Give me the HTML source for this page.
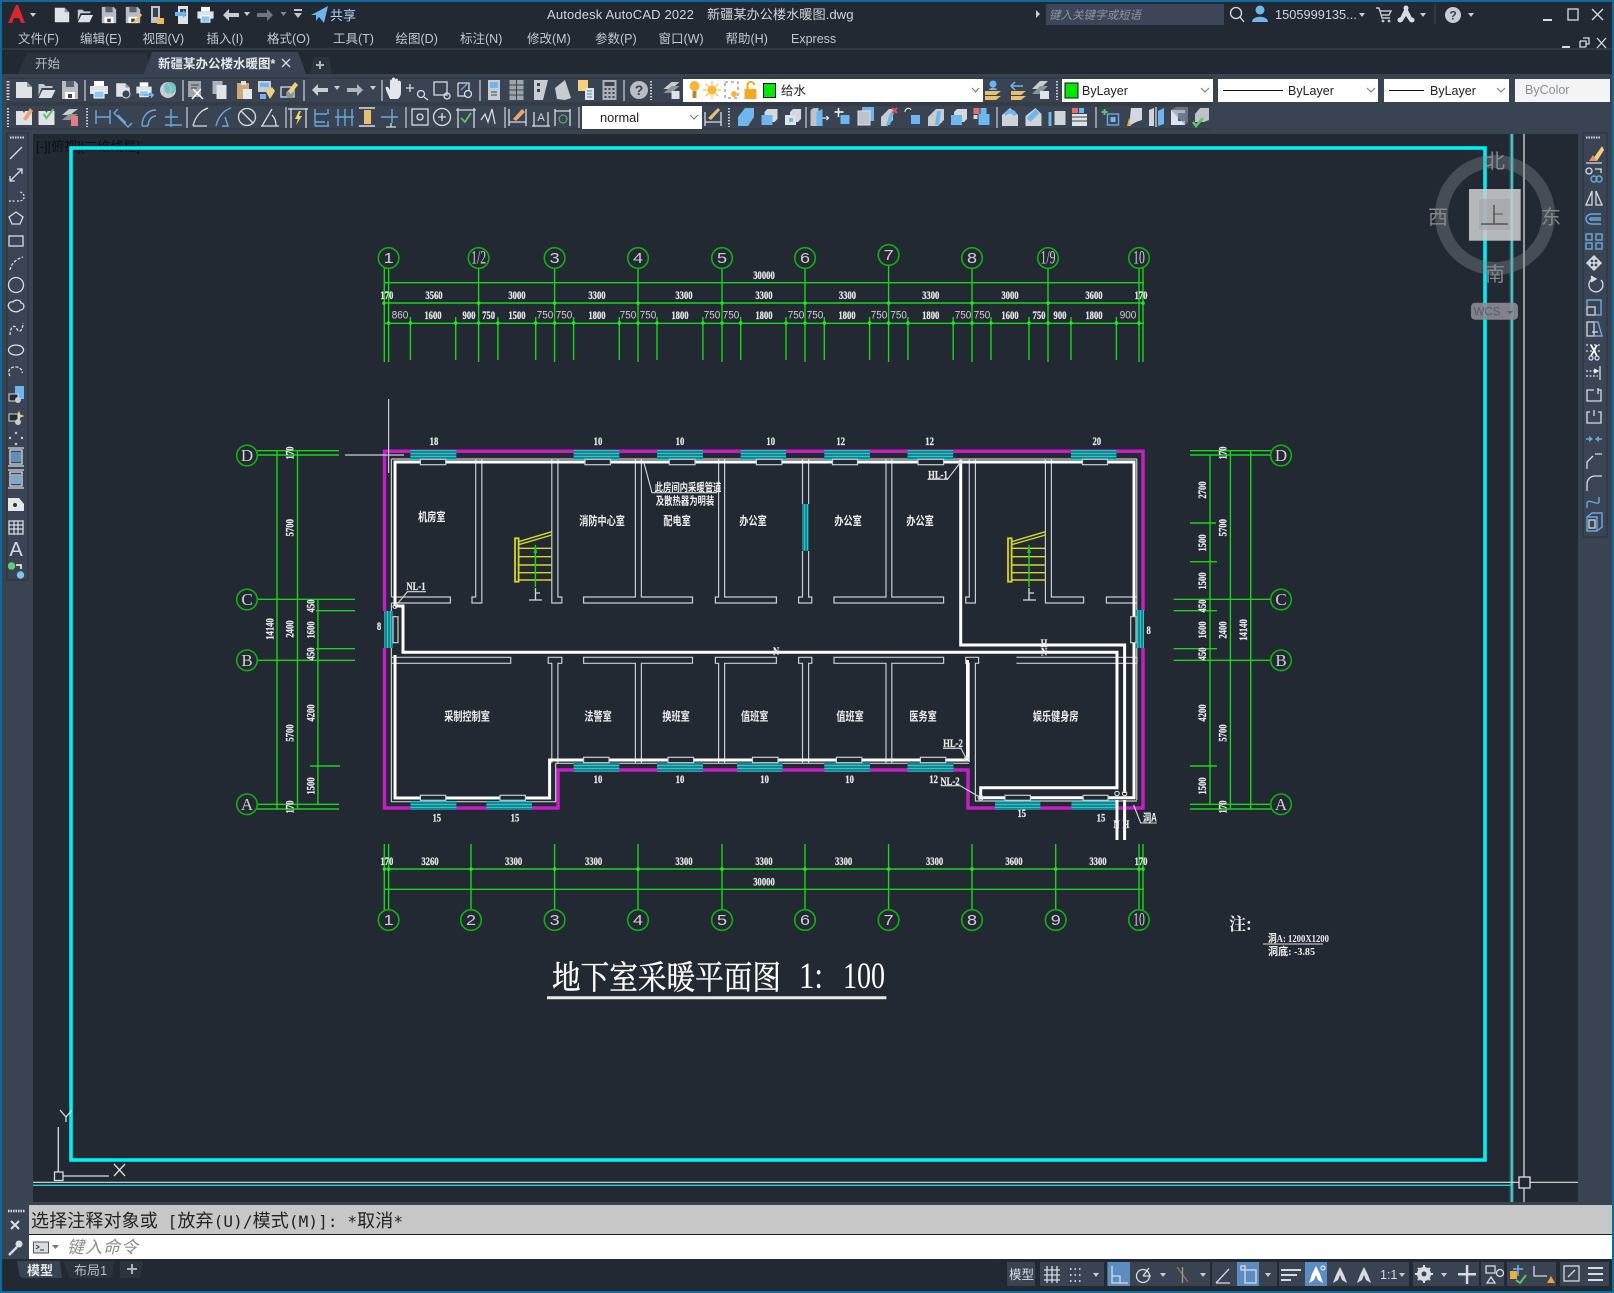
<!DOCTYPE html>
<html lang="zh"><head><meta charset="utf-8"><title>AutoCAD</title>
<style>
html,body{margin:0;padding:0;background:#222932;width:1614px;height:1293px;overflow:hidden}
svg{display:block;position:absolute;left:0;top:0}
text{font-family:"Liberation Sans","Noto Sans CJK SC",sans-serif}
.ui{font-size:12.5px;fill:#c4c8cd}
.d,.v,.t,.tv,.r,.n,.nn,.l{text-anchor:middle;dominant-baseline:central;transform-box:fill-box;transform-origin:center}
.d{font:bold 12px "Liberation Serif",serif;fill:#e8e8e8;stroke:#e8e8e8;stroke-width:.25;transform:scaleX(.72)}
.v{font:bold 12px "Liberation Serif",serif;fill:#e8e8e8;stroke:#e8e8e8;stroke-width:.25;transform:rotate(-90deg) scaleX(.72)}
.t{font:11px "Liberation Sans",sans-serif;fill:#d0d0d0;transform:scaleX(.9)}
.r{font:bold 12px "Noto Sans CJK SC",sans-serif;fill:#eee;transform:scaleX(.76)}
.n{font:15px "Liberation Sans",sans-serif;fill:#cfcfcf;transform:scaleX(1.2)}
.nn{font:19px "Liberation Serif",serif;fill:#cfcfcf;transform:scaleX(.62)}
.l{font:17px "Liberation Serif",serif;fill:#cfcfcf}
.g{fill:none;stroke:#1ad41a;stroke-width:1.4}
.c{fill:none;stroke:#12b012;stroke-width:1.6}
.w{fill:none;stroke:#c9cdd3;stroke-width:1.2}
.p{fill:none;stroke:#fff;stroke-width:3}
.s{fill:none;stroke:#d8dce2;stroke-width:1.3}
.b{fill:none;stroke:#6aa8dc;stroke-width:1.4}
.h{fill:#d5d9de}
.k{fill:#6fb6ee}
</style></head><body>
<svg width="1614" height="1293" viewBox="0 0 1614 1293" xmlns="http://www.w3.org/2000/svg">
<defs>
<pattern id="st" width="4" height="3" patternUnits="userSpaceOnUse"><rect width="4" height="3" fill="#178592"/><rect width="4" height="1" fill="#2cc6c8"/></pattern>
<pattern id="sv" width="3" height="4" patternUnits="userSpaceOnUse"><rect width="3" height="4" fill="#178592"/><rect width="1" height="4" fill="#2cc6c8"/></pattern>
<g id="new"><path d="M-8-8H3L8-3V8H-8Z" fill="#dfe2e6"/><path d="M3-8L8-3H3Z" fill="#8d939b"/></g>
<g id="open"><path d="M-8-6H-3L-1-4H6V-2H-5L-8 6Z" fill="#c4c8cd"/><path d="M-8 8L-4 0H9L5 8Z" fill="#dde0e4"/></g>
<g id="save"><path d="M-8-9H5L8-6V9H-8Z" fill="#b9bdc3"/><rect x="-4" y="-9" width="8" height="6" fill="#5b6270"/><rect x="-5" y="2" width="10" height="7" fill="#fff"/><rect x="-2" y="4" width="4" height="4" fill="#444"/></g>
<g id="print"><rect x="-5" y="-9" width="10" height="5" fill="#fff"/><rect x="-9" y="-4" width="18" height="8" fill="#dfe2e6"/><rect x="-5" y="1" width="10" height="7" fill="#8cc6f2" stroke="#fff"/></g>
<g id="tri"><path d="M-3-2H3L0 2Z" fill="#c9cdd2"/></g>
<g id="undo"><path d="M-8 0L-2-6V-2H8V2H-2V6Z" fill="#c9cdd2"/></g>
<g id="redo"><path d="M8 0L2-6V-2H-8V2H2V6Z" fill="#b0b5bb"/></g>
<g id="blk"><path d="M-8-4L-2-9H8V4L2 9H-8Z" fill="#d5d9de"/><path d="M-8-4H2V9H-8Z" fill="#6fb6ee"/></g>
<g id="blk2"><path d="M-5-5L-2-8H8V2L5 5H-5Z" fill="#d5d9de"/><rect x="-8" y="-2" width="11" height="10" fill="#6fb6ee"/></g>
<g id="box"><rect x="-2" y="-2" width="9" height="9" fill="#6fb6ee"/></g>
</defs>

<!-- base -->
<rect width="1614" height="1293" fill="#222932"/>
<rect y="74" width="1614" height="60" fill="#3a4352"/>
<rect x="0" y="74" width="33" height="1140" fill="#3a4352"/>
<rect x="1578" y="74" width="36" height="1140" fill="#3a4352"/>
<rect x="7" y="133" width="21" height="447" fill="#3b4454" stroke="#2b313c"/>
<rect x="1583" y="133" width="24" height="404" fill="#3b4454" stroke="#2b313c"/>

<!-- title bar -->
<path d="M0 49H1614" stroke="#414a58"/>
<path d="M8 23L16 5H18L25 23H21L19 18H14L12 23Z" fill="#d8282b"/>
<use href="#tri" x="33" y="15"/>
<g transform="translate(62,15) scale(.9)"><use href="#new"/></g>
<g transform="translate(85,15) scale(.9)"><use href="#open"/></g>
<g transform="translate(109,15) scale(.9)"><use href="#save"/></g>
<g transform="translate(133,15) scale(.9)"><use href="#save"/><path d="M0 8L8-2L10 0L3 9Z" fill="#f4c06a"/></g>
<g transform="translate(157,15)"><rect x="-6" y="-9" width="9" height="17" fill="#c0c4c9"/><rect x="-4" y="-7" width="5" height="9" fill="#3a4352"/><path d="M0 3H7V9H0Z" fill="#f2b84a"/></g>
<g transform="translate(182,15)"><rect x="-4" y="-9" width="10" height="18" fill="#dfe2e6"/><rect x="-2" y="-6" width="6" height="7" fill="#3a4352"/><path d="M-7-3H1V-5L5-1L1 3V1H-7Z" fill="#6fb6ee"/></g>
<g transform="translate(205.5,15) scale(.9)"><use href="#print"/></g>
<use href="#undo" x="231" y="15"/><use href="#tri" x="247" y="14"/>
<g opacity=".55"><use href="#redo" x="265" y="15"/></g><g opacity=".6"><use href="#tri" x="283.5" y="14"/></g>
<path d="M294 9H302V11H294ZM294 13H302L298 18Z" fill="#c4c8cd"/>
<path d="M311 15L328 6L324 23L319 17L316 21V15Z" fill="#69b4ea"/>
<text x="330" y="20" style="font-size:13px;fill:#a8d4f0">共享</text>
<text x="547" y="19" style="font-size:13px;fill:#d2d5d9;letter-spacing:.15px">Autodesk AutoCAD 2022</text>
<text x="707" y="19" style="font-size:13.2px;fill:#d2d5d9">新疆某办公楼水暖图.dwg</text>
<path d="M1036 10L1040 14L1036 18Z" fill="#c9cdd2"/>
<rect x="1046" y="4" width="178" height="21" fill="#3c4658"/>
<text x="1049" y="19" style="font-size:11.5px;font-style:italic;fill:#8f96a2">键入关键字或短语</text>
<g class="s" transform="translate(1236,13)"><circle r="5.5"/><path d="M4 4L8 9"/></g>
<g class="k"><circle cx="1260" cy="10" r="4.5"/><path d="M1252 22C1252 15 1268 15 1268 22Z"/></g>
<text x="1275" y="19" style="font-size:12.8px;fill:#d2d5d9">1505999135...</text>
<use href="#tri" x="1362" y="15"/>
<path d="M1376 8H1379L1382 18H1390M1380 11H1391L1389 15H1382" stroke="#c4c8cd" stroke-width="1.4" fill="none"/><circle cx="1383" cy="21" r="1.4" fill="#c4c8cd"/><circle cx="1389" cy="21" r="1.4" fill="#c4c8cd"/>
<path d="M1406 6L1414 22H1410L1406 16L1402 22H1398Z" fill="#d8dce2"/><circle cx="1406" cy="8" r="2.5" fill="#d8dce2"/><circle cx="1400" cy="20" r="2.5" fill="#d8dce2"/><circle cx="1412" cy="20" r="2.5" fill="#d8dce2"/>
<use href="#tri" x="1423" y="15"/>
<path d="M1435 4V24" stroke="#3e4653"/>
<circle cx="1453" cy="15" r="8" fill="#c9cdd2"/><text x="1453" y="19.5" text-anchor="middle" style="font-size:12px;font-weight:bold;fill:#3a4352">?</text>
<use href="#tri" x="1471" y="15"/>
<path d="M1543 20H1552" stroke="#d8dce2" stroke-width="2"/>
<rect x="1568" y="9" width="10" height="11" class="s"/>
<path d="M1592 9L1603 20M1603 9L1592 20" class="s" stroke-width="1.5"/>
<path d="M1562 47H1570" stroke="#d8dce2" stroke-width="2"/>
<path d="M1580 41H1586V47M1583 38H1589V44H1586M1580 41V47H1586" class="s"/>
<path d="M1597 38L1606 48M1606 38L1597 48" class="s" stroke-width="1.5"/>

<!-- menu -->
<g class="ui">
<text x="18" y="43">文件(F)</text><text x="80" y="43">编辑(E)</text><text x="142.5" y="43">视图(V)</text><text x="206.5" y="43">插入(I)</text><text x="267" y="43">格式(O)</text><text x="333" y="43">工具(T)</text><text x="395.5" y="43">绘图(D)</text><text x="460" y="43">标注(N)</text><text x="527" y="43">修改(M)</text><text x="595" y="43">参数(P)</text><text x="658.5" y="43">窗口(W)</text><text x="725.5" y="43">帮助(H)</text><text x="791" y="43">Express</text>
</g>

<!-- tabs -->
<path d="M18 74L27 53H146L152 74Z" fill="#2c333f"/>
<path d="M144 74L152 52H298L306 74Z" fill="#3a4352"/>
<path d="M310 74L313 60Q314 57 318 57H329L332 74Z" fill="#2c333f"/>
<text x="35" y="68" style="font-size:12.5px;fill:#b8bcc2">开始</text>
<text x="158" y="68" style="font-size:12.5px;font-weight:bold;fill:#e6e8ea">新疆某办公楼水暖图*</text>
<path d="M282 59L290 67M290 59L282 67" class="s" stroke-width="1.5"/>
<path d="M320 61V69M316 65H324" stroke="#aeb3ba" stroke-width="2"/>

<!-- toolbar backgrounds -->
<path d="M6 78H1212M6 103H1212M6 105H1212M6 129H1212" stroke="#2d343f" fill="none"/>
<path d="M8 81V100" stroke="#c9cdd2" stroke-dasharray="1.5 1.5" stroke-width="3"/>
<path d="M8 108V127M87 108V127M729 108V127M1057 81V100M651 81V100" stroke="#c9cdd2" stroke-dasharray="1.5 1.5" stroke-width="2"/>
<path d="M85 80V101M183 80V101M304 80V101M382 80V101M480 80V101M624 80V101M187 107V128M286 107V128M406 107V128M505 107V128M579 107V128M806 107V128M997 107V128M1096 107V128" stroke="#cdd1d6" stroke-width="1.2"/>

<!-- toolbar 1 icons -->
<use href="#new" x="24" y="90"/><use href="#open" x="46.5" y="90"/><use href="#save" x="70" y="90"/>
<use href="#print" x="99" y="90"/>
<g transform="translate(123,90)"><use href="#new" transform="scale(.85)"/><circle cx="3" cy="4" r="4" fill="#3a4352" stroke="#d8dce2"/></g>
<g transform="translate(144,90) scale(.85)"><use href="#print"/><path d="M0 5H8V2L12 6L8 10V7H0Z" fill="#6fb6ee"/></g>
<g transform="translate(168,90)"><circle r="8" fill="#c9cdd2"/><circle cx="2" cy="-2" r="6" fill="#6cc4c8"/><path d="M0-6C4-4 4 2 0 5" stroke="#e4c070" fill="none"/></g>
<g transform="translate(196,90)"><rect x="-8" y="-9" width="13" height="16" fill="#9fa4ab"/><path d="M-5-5H3M-5-2H1" stroke="#3a4352"/><path d="M-3-1L7 9M5-1L-4 9" stroke="#fff" stroke-width="1.5"/></g>
<g transform="translate(219.5,90)"><rect x="-7" y="-9" width="10" height="13" fill="#aeb2b8"/><rect x="-3" y="-5" width="10" height="14" fill="#dfe2e6"/></g>
<g transform="translate(244,90)"><rect x="-7" y="-7" width="12" height="16" fill="#d0a878"/><rect x="-3" y="-9" width="5" height="4" fill="#dfe2e6"/><rect x="-1" y="-1" width="9" height="10" fill="#e6e8ea"/></g>
<g transform="translate(266,90)"><rect x="-8" y="-9" width="13" height="11" fill="#c9cdd2"/><rect x="-6" y="-7" width="9" height="4" fill="#6fb6ee"/><path d="M-6 4H0V9H-6Z" fill="#6fb6ee"/><path d="M0 2L6-3L9 1L4 9Z" fill="#f2cf7a"/></g>
<g transform="translate(289,90)"><rect x="-8" y="-3" width="13" height="10" class="s"/><circle cx="1" cy="4" r="4" fill="#8f949b"/><path d="M-1 1L6-8L9-5L2 4Z" fill="#f2cf7a"/></g>
<use href="#undo" x="320" y="90"/><use href="#tri" x="337" y="88"/><use href="#redo" x="355" y="90"/><use href="#tri" x="373" y="88"/>
<path d="M390 99C386 90 385 88 386 87C388 86 389 88 390 90V81C390 79 392 79 392 81V79C392 77 395 77 395 79V80C395 78 398 78 398 80V82C398 80 401 80 401 83V92C401 96 399 99 397 99Z" fill="#e3e6ea"/>
<g class="s"><path d="M410 84V92M406 88H414"/><circle cx="421" cy="94" r="3.5"/><path d="M424 97L428 100"/></g>
<g class="s"><rect x="434" y="82" width="13" height="13"/><circle cx="447" cy="96" r="3"/></g>
<g class="s"><path d="M458 83H469V90M458 83V96H465"/><circle cx="468" cy="94" r="3.5"/><path d="M461 90L467 84" class="b"/></g>
<g transform="translate(494,90)"><rect x="-6" y="-10" width="12" height="20" fill="#c9cdd2"/><rect x="-4" y="-8" width="8" height="6" fill="#6fb6ee"/><path d="M-3 2H3M-3 5H3" stroke="#3a4352"/></g>
<g transform="translate(516.5,90)"><rect x="-7" y="-10" width="14" height="20" fill="#9fa4ab"/><path d="M-7-5H7M-7 0H7M-7 5H7M0-10V10" stroke="#3a4352"/></g>
<g transform="translate(541,90)"><path d="M-7-10H7L2 10H-7Z" fill="#c9cdd2"/><rect x="-4" y="-7" width="3" height="3" fill="#3a4352"/><rect x="-4" y="-1" width="3" height="3" fill="#3a4352"/></g>
<g transform="translate(563,90)"><path d="M-6 9L-8-2L2-10L8 8L2 10Z" fill="#c9cdd2"/></g>
<g transform="translate(586,90)"><rect x="-8" y="-10" width="10" height="11" fill="#f4d27a"/><rect x="-1" y="-2" width="9" height="12" fill="#dfe2e6"/><path d="M1 1H6M1 4H6M1 7H6" stroke="#5682b8"/></g>
<g transform="translate(609.5,90)"><rect x="-7" y="-10" width="14" height="20" fill="#aeb2b8"/><rect x="-5" y="-8" width="10" height="4" fill="#3a4352"/><path d="M-5-1H5M-5 3H5M-5 7H5" stroke="#3a4352" stroke-width="2" stroke-dasharray="2 2"/></g>
<circle cx="639" cy="90" r="9" fill="#b9bdc3"/><text x="639" y="95" text-anchor="middle" style="font-size:14px;font-weight:bold;fill:#3a4352">?</text>
<g transform="translate(671.5,90)"><path d="M-8-1L0-8H8L0-1Z" fill="#c9cdd2"/><path d="M-8 3L0-4H8L0 3Z" fill="#8f949b"/><rect x="0" y="1" width="8" height="8" fill="#dfe2e6"/></g>

<!-- dropdowns row 1 -->
<rect x="683" y="79" width="300" height="23" fill="#fff"/>
<g transform="translate(694.5,89)"><circle cy="-3" r="5" fill="#f7b733"/><rect x="-2" y="2" width="4" height="7" fill="#b48a3a"/></g>
<g transform="translate(712,90)"><circle r="4.5" fill="#f7b733"/><path d="M0-9V9M-9 0H9M-6-6L6 6M6-6L-6 6" stroke="#f7b733"/></g>
<g transform="translate(732,90)"><rect x="-7" y="-8" width="13" height="16" fill="none" stroke="#777" stroke-dasharray="3 3"/><circle cx="2" cy="4" r="3" fill="#f7b733"/></g>
<g transform="translate(750.5,91)"><rect x="-6" y="-2" width="12" height="10" fill="#f4a720"/><path d="M-3-2V-6C-3-10 3-10 4-6" fill="none" stroke="#f4a720" stroke-width="2"/></g>
<rect x="763.5" y="83.5" width="12" height="14" fill="#00e800" stroke="#111"/>
<text x="781" y="95" style="font-size:12.5px;fill:#222">给水</text>
<path d="M972 88L975.5 92L979 88" fill="none" stroke="#777"/>
<g transform="translate(993,90)"><path d="M-8 1H8L3 5H-8ZM-8 6H8L3 10H-8Z" fill="#e4c070"/><circle cy="-6" r="3.5" fill="#6fb6ee"/><path d="M-4 0C-4-3 4-3 4 0" fill="#6fb6ee"/></g>
<g transform="translate(1018,90)"><path d="M-7 1H8L3 5H-7ZM-7 6H8L3 10H-7Z" fill="#e4c070"/><path d="M-3-8L-7-4L-3 0M-7-4H5" stroke="#6fb6ee" stroke-width="1.5" fill="none"/></g>
<g transform="translate(1040,90)"><path d="M-8-1L0-9H8L0-1Z" fill="#c9cdd2"/><path d="M-8 4L0-4H8L0 4Z" fill="#8f949b"/><rect x="0" y="1" width="9" height="8" fill="#dfe2e6"/></g>
<rect x="1062" y="79" width="151" height="23" fill="#fff"/>
<rect x="1065" y="83" width="13" height="15" fill="#00e800" stroke="#111"/>
<text x="1082" y="95" style="font-size:12.5px;fill:#222">ByLayer</text>
<path d="M1201 88L1205 92L1209 88" fill="none" stroke="#777"/>
<rect x="1218" y="79" width="160" height="23" fill="#fff"/>
<path d="M1223 90.5H1283" stroke="#111"/>
<text x="1288" y="95" style="font-size:12.5px;fill:#222">ByLayer</text>
<path d="M1367 88L1371 92L1375 88" fill="none" stroke="#777"/>
<rect x="1384" y="79" width="125" height="23" fill="#fff"/>
<path d="M1389 90.5H1424" stroke="#111"/>
<text x="1430" y="95" style="font-size:12.5px;fill:#222">ByLayer</text>
<path d="M1497 88L1501 92L1505 88" fill="none" stroke="#777"/>
<rect x="1515" y="79" width="95" height="23" fill="#f4f4f4"/>
<text x="1525" y="94" style="font-size:12.5px;fill:#8a8f96">ByColor</text>

<!-- toolbar 2 icons -->
<g transform="translate(24,117)"><path d="M-8-6H-1L0-4L1-6H8V8H-8Z" fill="#dfe2e6"/><path d="M-1 2L6-9L9-6L2 4Z" fill="#f2a36a"/></g>
<g transform="translate(46.5,117)"><path d="M-8-6H-1L0-4L1-6H8V8H-8Z" fill="#dfe2e6"/><path d="M-3-3L0 1L7-8" stroke="#5fc46a" stroke-width="2" fill="none"/></g>
<g transform="translate(70,117)"><path d="M-8-2L-1-8H8L0-2Z" fill="#c9cdd2"/><path d="M-8 3L-1-3H8L0 3Z" fill="#8f949b"/><rect x="1" y="-1" width="7" height="10" fill="#e67a80"/></g>
<g class="b"><path d="M96 110V124M110 110V124M96 117H110"/><path d="M118 109L114 113L128 127L132 123M118 115L126 123"/><path d="M142 126C142 116 148 110 156 110M148 126C148 120 152 116 156 116"/><path d="M142 126H148"/><path d="M165 125H182M171 109V127M165 117H178"/></g>
<g class="s"><path d="M193 126C195 117 201 110 208 108L204 110M193 126L207 126"/></g>
<g class="b"><path d="M216 126C218 117 224 110 231 108M225 117L228 126H222"/></g>
<g class="s"><circle cx="247" cy="117" r="8.5"/><path d="M241 111L253 123"/></g>
<g class="s"><path d="M261 126H279M262 126L272 109M272 115C275 118 276 122 276 126"/></g>
<g class="s"><path d="M291 108V128M306 108V128M288 109H308"/></g><path d="M299 111L295 119H298L296 125L302 116H299L301 111Z" fill="#f4d27a"/>
<g class="b"><path d="M315 109V126M328 109V114M328 121V126M315 114H327M315 122H325M315 126H329"/></g>
<g class="b"><path d="M338 109V126M345 109V126M352 109V126M335 117H354"/></g>
<g transform="translate(367,117)"><rect x="-3" y="-7" width="7" height="14" fill="#e4c070"/><path d="M-8-9H8M-8 9H8" stroke="#d8dce2" stroke-width="1.5"/></g>
<g class="b"><path d="M381 117H398M392 109V123"/></g><path d="M386 127H396M391 123V127" class="s"/>
<g class="s"><rect x="412" y="109" width="16" height="16"/><circle cx="420" cy="117" r="3"/></g>
<g class="s"><circle cx="442" cy="117" r="8.5"/><path d="M442 113V121M438 117H446"/></g>
<g class="s"><path d="M458 108V128M474 108V128M456 110H476"/></g><path d="M461 118L465 122L471 113" stroke="#5fc46a" stroke-width="1.8" fill="none"/>
<path d="M481 120L485 114L488 122L492 109L495 124" class="s"/>
<g class="s"><path d="M509 109V126M526 109V126M509 122H526"/></g><path d="M513 119L522 109L525 112L516 121Z" fill="#f2a36a"/>
<g class="s"><path d="M532 126H550M534 126V112M548 126V112"/></g><text x="541" y="121" text-anchor="middle" style="font-size:11px;fill:#d8dce2">A</text>
<g class="s"><path d="M555 109V126M570 109V126M555 111H570"/></g><circle cx="563" cy="119" r="4" fill="none" stroke="#5fc46a"/>
<rect x="582" y="106" width="120" height="23" fill="#fff"/>
<text x="600" y="122" style="font-size:12.8px;fill:#222">normal</text>
<path d="M690 115L694 119L698 115" fill="none" stroke="#777"/>
<g class="s"><path d="M705 126V112M721 126V112M705 122H721"/></g><path d="M708 118L718 108L720 110L711 120Z" fill="#e4c070"/>

<!-- solid edit icons row -->
<g transform="translate(746,117)"><path d="M-8 0L-1-9H8V0L2 9H-8Z" fill="#6fb6ee"/></g>
<g transform="translate(769.5,117)"><use href="#blk2"/></g>
<g transform="translate(793,117)"><path d="M-3-5L0-8H8V2L5 5H-3Z" fill="#d5d9de"/><rect x="-8" y="-2" width="11" height="10" fill="#dfe2e6"/><rect x="-4" y="1" width="4" height="4" fill="#6fb6ee"/></g>
<g transform="translate(818.5,117)"><path d="M-8 9V-5Q-8-9-3-9H0V9Z" fill="#bfc3c8"/><path d="M-2 9V-5L4-8V9Z" fill="#6fb6ee"/><path d="M4 1H10M8-1L10 1L8 3" stroke="#fff" fill="none"/></g>
<g transform="translate(842.5,117)"><path d="M-8-5H1M-4-9V0" stroke="#fff" stroke-width="1.5"/><use href="#box" x="0" y="0"/></g>
<g transform="translate(866,117)"><rect x="-4" y="-10" width="12" height="14" fill="#6fb6ee"/><rect x="-8" y="-6" width="12" height="14" fill="#bfc3c8" stroke="#dfe2e6"/></g>
<g transform="translate(889,117)"><path d="M-8 9V0L0-8H4V3L-2 9Z" fill="#c9cdd2"/><path d="M-3 8L1-4H5L1 8Z" fill="#6fb6ee"/><path d="M3-9L8-4M8-9L3-4" stroke="#e0505a" stroke-width="2"/></g>
<g transform="translate(913,117)"><path d="M-8-5C-8-9 -3-10 -2-7" stroke="#fff" fill="none"/><use href="#box" x="0" y="0"/></g>
<g transform="translate(936,117)"><path d="M-8 9V0L0-8H8V3L2 9Z" fill="#c9cdd2"/><path d="M-1 8L1-6H5L3 8Z" fill="#6fb6ee"/></g>
<g transform="translate(959,117)"><use href="#blk2"/></g>
<g transform="translate(981.5,117)"><rect x="-8" y="-9" width="6" height="6" fill="#e07070"/><rect x="-1" y="-9" width="6" height="6" fill="#6fb6ee"/><rect x="-3" y="-3" width="11" height="11" fill="#6fb6ee"/><rect x="-8" y="-2" width="4" height="4" fill="#d5d9de"/></g>
<g transform="translate(1010,117)"><path d="M-8 9V-2L0-9L8-2V9Z" fill="#d0d4d9"/><path d="M-6-3C-3-9 4-9 7-3L4-1C2-4-2-4-4-1Z" fill="#6fb6ee"/></g>
<g transform="translate(1033.5,117)"><path d="M-8 9V-1L2-9L8-3V9Z" fill="#d0d4d9"/><path d="M-7 1L2-8L6-4L-3 5Z" fill="#6fb6ee"/></g>
<g transform="translate(1057.5,117)"><rect x="-9" y="-5" width="3" height="14" fill="#6fb6ee"/><rect x="-3" y="-6" width="11" height="14" fill="#d0d4d9"/></g>
<g transform="translate(1080,117)"><rect x="-8" y="-9" width="6" height="5" fill="#e07070"/><rect x="-1" y="-9" width="5" height="5" fill="#6fb6ee"/><rect x="-8" y="-3" width="15" height="12" fill="#dfe2e6"/><path d="M-8 0H7M-8 4H7" stroke="#3a4352"/></g>
<g transform="translate(1110.5,117)"><path d="M-9-5H-3M-6-8V-2" stroke="#5fc46a" stroke-width="2"/><rect x="-3" y="-3" width="11" height="11" class="b"/><rect x="0" y="0" width="5" height="5" fill="#6fb6ee"/></g>
<g transform="translate(1134,117)"><path d="M-5 9L-3-9H8V3L2 5Z" fill="#d5d9de"/><path d="M-7 9L-5 1L-3 9Z" fill="#e4b040"/></g>
<g transform="translate(1157,117)"><path d="M-8-7L-3-9V9H-8Z" fill="#d0d4d9"/><path d="M1-6L7-9V7L1 9Z" fill="#6fb6ee"/><path d="M-1-10V10" stroke="#fff"/></g>
<g transform="translate(1179,117)"><rect x="-8" y="-7" width="14" height="15" fill="#dfe2e6"/><rect x="-1" y="-4" width="7" height="8" fill="#2f5f8c"/><path d="M-8-7L-3-10H9V5L6 8" fill="#8f949b" opacity=".6"/></g>
<g transform="translate(1201,117)"><path d="M-6 5V-3L-1-9H8V3L3 5Z" fill="#bfc3c8"/><path d="M-8 5L-5 9L2 1" stroke="#5fc46a" stroke-width="2.5" fill="none"/></g>

<!-- canvas -->
<rect x="33" y="134" width="1545" height="1068" fill="#222932"/>
<text x="36" y="151" style="font-size:13px;fill:#0b0f14">[-][俯视][二维线框]</text>
<path d="M1509.5 134H1514V1202H1509.5Z" fill="#46535f"/>
<path d="M1511.8 134V1202" stroke="#35d6d6" stroke-width="2"/>
<path d="M1524 134V1202" stroke="#e8e8e8" stroke-width="1.2"/>
<path d="M33 1185.3H1511" stroke="#2fd0d0" stroke-width="1.3"/>
<path d="M33 1182.3H1578" stroke="#e0e0e0" stroke-width="1.2"/>
<rect x="1519" y="1177" width="11" height="11" fill="#222932" stroke="#eee" stroke-width="1.2"/>
<rect x="71" y="148" width="1414" height="1012" fill="none" stroke="#00f0f2" stroke-width="3.6"/>
<g class="s" stroke="#e0e0e0"><path d="M58.3 1127V1172M63 1176H109"/><rect x="54.5" y="1172" width="8.5" height="8.5"/><path d="M114 1164L125 1176M125 1164L114 1176M60 1110L66 1117L72 1110M66 1117V1122"/></g>

<!-- dims green -->
<path class="g" d="M384 282.7H1144M384 303H1144M384 323.3H1144M384.3 268V362M388.6 268V362M478.6 268V362M554.6 268V362M638 268V362M722 268V362M805 268V362M888.6 265V362M972 268V362M1048 268V362M1139 268V362M1143 268V362"/>
<path class="g" d="M410.4 317V360M455.7 317V360M497.9 317V360M535.7 317V360M573.6 317V360M619.3 317V360M657 317V360M702.9 317V360M740.7 317V360M786 317V360M824.3 317V360M869.6 317V360M907.9 317V360M953.2 317V360M991 317V360M1029 317V360M1071 317V360M1116.4 317V360"/>
<path d="M384 303v.1M388.6 323v.1M410.4 323v.1M455.7 323v.1M478.6 303v.1M478.6 323v.1M497.9 323v.1M535.7 323v.1M554.6 303v.1M554.6 323v.1M573.6 323v.1M619.3 323v.1M638 303v.1M638 323v.1M657 323v.1M702.9 323v.1M722 303v.1M722 323v.1M740.7 323v.1M786 323v.1M805 303v.1M805 323v.1M824.3 323v.1M869.6 323v.1M888.6 303v.1M888.6 323v.1M907.9 323v.1M953.2 323v.1M972 303v.1M972 323v.1M991 323v.1M1029 323v.1M1048 303v.1M1048 323v.1M1071 323v.1M1116.4 323v.1M1139 323v.1M1143 303v.1" stroke="#2de02d" stroke-width="3.5" stroke-linecap="round"/>
<path class="g" d="M384 869H1144M384 889.3H1144M384.3 844V910M388.6 844V910M471 844V910M554.6 844V910M638 844V910M722 844V910M805 844V910M888.6 844V910M972 844V910M1055.7 844V910M1139 844V910M1143 844V910"/>
<path d="M384.3 869v.1M388.6 869v.1M471 869v.1M554.6 869v.1M638 869v.1M722 869v.1M805 869v.1M888.6 869v.1M972 869v.1M1055.7 869v.1M1139 869v.1M1143 869v.1" stroke="#2de02d" stroke-width="3.5" stroke-linecap="round"/>
<path class="g" d="M257 450.7H339M257 455H339M257 599.3H355M316 610.7H355M316 648.7H355M257 660.3H355M310 766H340M257 804.3H339M257 809H339M277 450.7V809M297.5 450.7V809M317.9 599.3V804.3"/>
<path class="g" d="M1190 450.7H1271M1190 455H1271M1190 523H1216M1190 561.7H1217M1173.6 599.3H1271M1173.6 610.7H1217M1173.6 648.7H1217M1173.6 660.3H1271M1190 766H1217M1190 804.3H1271M1190 809H1271M1210 455V805M1230.4 450.7V809M1250.7 450.7V809"/>
<g class="c" fill="none">
<circle cx="388.6" cy="258" r="10.3"/><circle cx="478.6" cy="258" r="10.3"/><circle cx="554.6" cy="258" r="10.3"/><circle cx="638" cy="258" r="10.3"/><circle cx="722" cy="258" r="10.3"/><circle cx="805" cy="258" r="10.3"/><circle cx="888.6" cy="255" r="10.3"/><circle cx="972" cy="258" r="10.3"/><circle cx="1048" cy="258" r="10.3"/><circle cx="1139" cy="258" r="10.3"/>
<circle cx="388.6" cy="920" r="10.3"/><circle cx="471" cy="920" r="10.3"/><circle cx="554.6" cy="920" r="10.3"/><circle cx="638" cy="920" r="10.3"/><circle cx="722" cy="920" r="10.3"/><circle cx="805" cy="920" r="10.3"/><circle cx="888.6" cy="920" r="10.3"/><circle cx="972" cy="920" r="10.3"/><circle cx="1055.7" cy="920" r="10.3"/><circle cx="1139" cy="920" r="10.3"/>
<circle cx="247" cy="455.5" r="10.3"/><circle cx="247" cy="599.5" r="10.3"/><circle cx="247" cy="660.3" r="10.3"/><circle cx="247" cy="804.3" r="10.3"/>
<circle cx="1281" cy="455.5" r="10.3"/><circle cx="1281" cy="599.5" r="10.3"/><circle cx="1281" cy="660.3" r="10.3"/><circle cx="1281" cy="804.3" r="10.3"/>
</g>
<text class="n" x="388.6" y="258">1</text><text class="nn" x="478.6" y="258">1/2</text><text class="n" x="554.6" y="258">3</text><text class="n" x="638" y="258">4</text><text class="n" x="722" y="258">5</text><text class="n" x="805" y="258">6</text><text class="n" x="888.6" y="255">7</text><text class="n" x="972" y="258">8</text><text class="nn" x="1048" y="258">1/9</text><text class="nn" x="1139" y="258">10</text>
<text class="n" x="388.6" y="920">1</text><text class="n" x="471" y="920">2</text><text class="n" x="554.6" y="920">3</text><text class="n" x="638" y="920">4</text><text class="n" x="722" y="920">5</text><text class="n" x="805" y="920">6</text><text class="n" x="888.6" y="920">7</text><text class="n" x="972" y="920">8</text><text class="n" x="1055.7" y="920">9</text><text class="nn" x="1139" y="920">10</text>
<text class="l" x="247" y="455.5">D</text><text class="l" x="247" y="599.5">C</text><text class="l" x="247" y="660.3">B</text><text class="l" x="247" y="804.3">A</text>
<text class="l" x="1281" y="455.5">D</text><text class="l" x="1281" y="599.5">C</text><text class="l" x="1281" y="660.3">B</text><text class="l" x="1281" y="804.3">A</text>

<!-- dim text top -->
<text class="d" x="764" y="276">30000</text>
<text class="d" x="386.8" y="296">170</text><text class="d" x="434" y="296">3560</text><text class="d" x="517" y="296">3000</text><text class="d" x="597" y="296">3300</text><text class="d" x="684" y="296">3300</text><text class="d" x="764" y="296">3300</text><text class="d" x="847.5" y="296">3300</text><text class="d" x="930.7" y="296">3300</text><text class="d" x="1010" y="296">3000</text><text class="d" x="1094" y="296">3600</text><text class="d" x="1141" y="296">170</text>
<text class="t" x="400" y="316">860</text><text class="d" x="433" y="316">1600</text><text class="d" x="469" y="316">900</text><text class="d" x="488.6" y="316">750</text><text class="d" x="517" y="316">1500</text><text class="t" x="545" y="316">750</text><text class="t" x="564" y="316">750</text><text class="d" x="597" y="316">1800</text><text class="t" x="628" y="316">750</text><text class="t" x="648" y="316">750</text><text class="d" x="680" y="316">1800</text><text class="t" x="712" y="316">750</text><text class="t" x="731" y="316">750</text><text class="d" x="764" y="316">1800</text><text class="t" x="796" y="316">750</text><text class="t" x="815" y="316">750</text><text class="d" x="847" y="316">1800</text><text class="t" x="879" y="316">750</text><text class="t" x="898.6" y="316">750</text><text class="d" x="930.7" y="316">1800</text><text class="t" x="963" y="316">750</text><text class="t" x="982" y="316">750</text><text class="d" x="1010" y="316">1600</text><text class="d" x="1039" y="316">750</text><text class="d" x="1060" y="316">900</text><text class="d" x="1094" y="316">1800</text><text class="t" x="1128" y="316">900</text>
<!-- dim text bottom -->
<text class="d" x="386.8" y="862">170</text><text class="d" x="430" y="862">3260</text><text class="d" x="513.6" y="862">3300</text><text class="d" x="593.6" y="862">3300</text><text class="d" x="684" y="862">3300</text><text class="d" x="764" y="862">3300</text><text class="d" x="843.6" y="862">3300</text><text class="d" x="934.6" y="862">3300</text><text class="d" x="1014" y="862">3600</text><text class="d" x="1098" y="862">3300</text><text class="d" x="1141" y="862">170</text>
<text class="d" x="764" y="882.7">30000</text>
<!-- dim text left -->
<text class="v" x="290.7" y="453">170</text><text class="v" x="290.7" y="527.7">5700</text><text class="v" x="270.7" y="629">14140</text><text class="v" x="290.7" y="629">2400</text><text class="v" x="311.4" y="606">450</text><text class="v" x="311.4" y="630">1600</text><text class="v" x="311.4" y="654">450</text><text class="v" x="311.4" y="713">4200</text><text class="v" x="311.4" y="786">1500</text><text class="v" x="290.7" y="733">5700</text><text class="v" x="290.7" y="807">170</text>
<!-- dim text right -->
<text class="v" x="1223.6" y="453">170</text><text class="v" x="1203" y="490">2700</text><text class="v" x="1223.6" y="527.7">5700</text><text class="v" x="1203" y="543">1500</text><text class="v" x="1203" y="581">1500</text><text class="v" x="1203" y="606">450</text><text class="v" x="1203" y="630">1600</text><text class="v" x="1223.6" y="630">2400</text><text class="v" x="1244" y="630">14140</text><text class="v" x="1203" y="654">450</text><text class="v" x="1203" y="713">4200</text><text class="v" x="1223.6" y="733">5700</text><text class="v" x="1203" y="786">1500</text><text class="v" x="1223.6" y="807">170</text>

<!-- walls magenta -->
<path d="M384.5 648V808H558V770H968V808H1143V648M1143 611V451.3H384.5V611" fill="none" stroke="#c41ec4" stroke-width="3.5"/>
<!-- walls -->
<path class="w" d="M391.4 459H1137M475.7 459V597H472V603H481.8V459M557.9 459V597H561.8V603H551.8V459M635.4 459V597H583.6V603H692.5V597H641.4V459M718.6 459V597H715.4V603H776.4V597H724.6V459M802.5 459V504M802.5 551V597H798.6V603H811.8V597H808.6V551M808.6 504V459M886 459V597H834V603H943.6V597H891.8V459M975.4 459V603H965.7V597H969.3V459M1045.4 459V603H1083.6V597H1051.4V459M1137 597H1106.4V603H1137M1136.8 459V800M391.4 459V597M391.4 597H450.4V603H391.4M391.4 603V612"/>
<path class="w" d="M391.4 648V801.7H555.7V763.3H969M391.4 657.3H510.7V663.3H391.4M551.8 763V663.3H548.2V657.3H561.8V663.3H557.9V763M635.4 763V663.3H583.6V657.3H692.5V663.3H641.4V763M718.6 763V663.3H715.4V657.3H776.4V663.3H724.6V763M802.5 763V663.3H798.6V657.3H811.8V663.3H808.6V763M886 763V663.3H834V657.3H943.6V663.3H891.8V763M969.3 762V663.3H965.7V657.3H978.6V663.3H975.4V801H1137M1016.4 657.3H1137V663.3H1016.4"/>
<!-- windows -->
<g fill="url(#st)">
<rect x="410.4" y="450" width="46" height="10"/><rect x="573.6" y="450" width="45.7" height="10"/><rect x="657" y="450" width="46" height="10"/><rect x="740.7" y="450" width="45.3" height="10"/><rect x="824.3" y="450" width="45.7" height="10"/><rect x="907.5" y="450" width="45.7" height="10"/><rect x="1071" y="450" width="45.4" height="10"/>
<rect x="410.4" y="801" width="46" height="9"/><rect x="486.4" y="801" width="45.6" height="9"/><rect x="995" y="801" width="45.4" height="9"/><rect x="1071.4" y="801" width="45" height="9"/>
<rect x="573.6" y="762.7" width="45.7" height="9"/><rect x="657" y="762.7" width="46" height="9"/><rect x="737" y="762.7" width="45.5" height="9"/><rect x="824.3" y="762.7" width="45.7" height="9"/><rect x="907.5" y="762.7" width="46" height="9"/>
</g>
<g fill="url(#sv)"><rect x="384.3" y="611" width="8.7" height="37"/><rect x="1136" y="610" width="8" height="38"/><rect x="802" y="504" width="6.6" height="46.7"/></g>
<!-- pipes -->
<path class="p" d="M395 606V462H1134V797.7H980.7V787.7H1117V652.3H403V606H395M395 655V798H549.6V760H967.5V660M960.7 462V645H1124.6V793M1117 800V840M1124.6 800V840"/>
<!-- radiators -->
<g fill="#222932" stroke="#c9cdd3" stroke-width="1.2">
<rect x="420.4" y="459.3" width="25.3" height="5.4"/><rect x="585" y="459.3" width="25.4" height="5.4"/><rect x="669.3" y="459.3" width="25.7" height="5.4"/><rect x="756.4" y="459.3" width="25.4" height="5.4"/><rect x="832.5" y="459.3" width="25" height="5.4"/><rect x="918" y="459.3" width="25.6" height="5.4"/><rect x="1082.5" y="459.3" width="25" height="5.4"/>
<rect x="583.6" y="757.3" width="25.4" height="5.4"/><rect x="668" y="757.3" width="25.6" height="5.4"/><rect x="752.5" y="757.3" width="25.5" height="5.4"/><rect x="836.4" y="757.3" width="25.4" height="5.4"/><rect x="920.4" y="757.3" width="25.3" height="5.4"/>
<rect x="420.4" y="795.3" width="25.3" height="5"/><rect x="500" y="795.3" width="25.4" height="5"/><rect x="1005" y="795.3" width="25.4" height="5"/><rect x="1083.2" y="795.3" width="24.8" height="5"/>
<rect x="393" y="616.7" width="5" height="26"/><rect x="1130.7" y="616.7" width="5.3" height="26"/>
</g>
<!-- crosshair-like lines -->
<path d="M388.6 399V473M345 455H404" stroke="#c9cdd3" stroke-width="1.2" fill="none"/>
<!-- stairs -->
<g fill="none" stroke="#d8d820" stroke-width="1.4">
<rect x="515" y="538.3" width="3.6" height="43.4" stroke-width="1.8"/>
<path d="M518.6 548.3H551.8M518.6 556.7H551.8M518.6 565H551.8M518.6 572.7H551.8M518.6 580H551.8M518.6 541.7L551.8 531.7M518.6 544.7L551.8 535"/>
<rect x="1008" y="538.3" width="3.6" height="43.4" stroke-width="1.8"/>
<path d="M1011.6 548.3H1045.4M1011.6 556.7H1045.4M1011.6 565H1045.4M1011.6 572.7H1045.4M1011.6 580H1045.4M1011.6 541.7L1045.4 531.7M1011.6 544.7L1045.4 535"/>
</g>
<path class="g" d="M535.4 545V587M1029 545V587"/>
<path d="M535.4 545L533.5 553H537.3ZM1029 545L1027 553H1031Z" fill="#17c817"/>
<g class="s" stroke="#fff"><path d="M535.5 588V600M535.5 593H540M529 600H542M1029 588V600M1029 593H1034M1023 600H1036"/></g>
<!-- leaders -->
<g fill="none" stroke="#d8dce0" stroke-width="1.1"><path d="M644 463L652 492.7H717M395 606.7L407.5 591.7H426M960.7 462L947.5 479.3H927.5M966.4 759L961 748.3H943M980.7 797.7L960 785.7H940.7M1133.6 805L1140.7 823H1156.8"/><circle cx="395" cy="606.5" r="2"/><circle cx="960.7" cy="462" r="2"/><circle cx="966.4" cy="759" r="2"/><circle cx="980.7" cy="797.7" r="2.5"/><circle cx="1117" cy="793.5" r="2.2"/><circle cx="1124.6" cy="793.5" r="2.2"/></g>
<!-- room labels -->
<text class="r" x="431.8" y="517.3">机房室</text><text class="r" x="602" y="521">消防中心室</text><text class="r" x="677" y="521">配电室</text><text class="r" x="753" y="521">办公室</text><text class="r" x="848" y="521">办公室</text><text class="r" x="920" y="521">办公室</text>
<text class="r" x="467" y="716.7">采制控制室</text><text class="r" x="598" y="716.7">法警室</text><text class="r" x="676" y="716.7">换班室</text><text class="r" x="754.6" y="716.7">值班室</text><text class="r" x="850" y="716.7">值班室</text><text class="r" x="923" y="716.7">医务室</text><text class="r" x="1055.7" y="716.7">娱乐健身房</text>
<text class="r" x="688" y="486.7" style="font-size:11px">此房间内采暖管道</text><text class="r" x="685" y="500" style="font-size:11px">及散热器为明装</text>
<!-- window numbers -->
<text class="d" x="434" y="442">18</text><text class="d" x="598" y="442">10</text><text class="d" x="680" y="442">10</text><text class="d" x="770.7" y="442">10</text><text class="d" x="840.7" y="442">12</text><text class="d" x="929.6" y="442">12</text><text class="d" x="1096.8" y="442">20</text>
<text class="d" x="598" y="780">10</text><text class="d" x="680" y="780">10</text><text class="d" x="764.6" y="780">10</text><text class="d" x="849.6" y="780">10</text><text class="d" x="933.6" y="780">12</text>
<text class="d" x="436.8" y="818.7">15</text><text class="d" x="515" y="818.7">15</text><text class="d" x="1021.8" y="814">15</text><text class="d" x="1101" y="818.7">15</text>
<text class="d" x="379" y="627">8</text><text class="d" x="1148.6" y="631">8</text>
<text class="d" x="416" y="587">NL-1</text><text class="d" x="938" y="475.7">HL-1</text><text class="d" x="953" y="744">HL-2</text><text class="d" x="950" y="782.3">NL-2</text>
<text class="r" x="1149.6" y="817" style="font-size:11px">洞A</text>
<text class="d" x="1044" y="644">H</text><text class="d" x="1044" y="652.7">N</text><text class="d" x="776" y="652">N</text><text class="d" x="1116.4" y="825">N</text><text class="d" x="1126" y="825">H</text>
<!-- title -->
<text x="552" y="989" textLength="229" lengthAdjust="spacingAndGlyphs" style="font-family:'Noto Serif CJK SC',serif;font-size:33px;fill:#fff;stroke:#fff;stroke-width:.4">地下室采暖平面图</text>
<text x="799" y="988" style="font-family:'Liberation Serif',serif;font-size:37px;fill:#fff" textLength="24" lengthAdjust="spacingAndGlyphs">1:</text>
<text x="843" y="988" style="font-family:'Liberation Serif',serif;font-size:37px;fill:#fff" textLength="42" lengthAdjust="spacingAndGlyphs">100</text>
<path d="M547 997.7H886.4" stroke="#e8e8e8" stroke-width="3"/>
<!-- note -->
<text x="1229" y="930" style="font-family:'Noto Serif CJK SC',serif;font-size:17px;font-weight:bold;fill:#eee">注:</text>
<text x="1268" y="942" style="font-family:'Liberation Serif','Noto Sans CJK SC',serif;font-size:11px;font-weight:bold;fill:#eee" textLength="61" lengthAdjust="spacingAndGlyphs">洞A: 1200X1200</text>
<text x="1268" y="955" style="font-family:'Liberation Serif','Noto Sans CJK SC',serif;font-size:11px;font-weight:bold;fill:#eee" textLength="47" lengthAdjust="spacingAndGlyphs">洞底: -3.85</text>
<path d="M1263 944H1323" stroke="#ddd"/>

<!-- view cube -->
<circle cx="1495" cy="215" r="53.5" fill="none" stroke="#8a8d92" stroke-opacity=".36" stroke-width="13"/>
<rect x="1469" y="189" width="51.7" height="51.7" fill="#c9cbcc" fill-opacity=".88"/>
<rect x="1479" y="199" width="31" height="31" fill="#a0a4a8" fill-opacity=".6"/>
<path d="M1481 224H1508M1494 205V224" stroke="#555" stroke-width="1.5"/><path d="M1494 214H1503" stroke="#555"/>
<g style="font-size:20px;fill:#85888c" text-anchor="middle"><text x="1495" y="168">北</text><text x="1495" y="281">南</text><text x="1438" y="224">西</text><text x="1551" y="224">东</text></g>
<rect x="1471" y="302.7" width="47" height="17" rx="4" fill="#8b8b94" fill-opacity=".9"/>
<text x="1487" y="315.5" text-anchor="middle" style="font-size:11.5px;fill:#5c5c66">WCS</text>
<path d="M1507 311H1513L1510 314Z" fill="#5c5c66"/>

<!-- left toolbar -->
<path d="M10 137.5H25" stroke="#ddd" stroke-dasharray="1.5 1" stroke-width="2"/>
<g class="s">
<path d="M10 159L22 147"/><path d="M10 181L22 169M10 176V181H15M22 174V169H17"/>
<path d="M9 201H15M17 201H20C26 200 25 193 20 192" stroke-dasharray="2 1.5"/>
<path d="M16 212L23 217L20 224H12L9 217Z"/><rect x="9" y="236" width="14" height="10"/>
<path d="M10 270C11 264 16 259 23 257" stroke-dasharray="3 1.5"/><circle cx="16" cy="285" r="7.5"/>
<path d="M10 309C6 305 10 301 13 302C15 299 21 300 21 303C25 303 25 310 20 310C18 313 12 312 10 309Z"/>
<path d="M10 335C10 328 14 323 17 329C19 334 23 330 23 323" stroke-dasharray="3 1.5"/>
<ellipse cx="16" cy="350" rx="7.5" ry="5"/><path d="M10 376C6 370 12 366 17 367C21 368 23 371 22 373" stroke-dasharray="3 1.5"/>
<path d="M10 464H22V450H10ZM8 466H24M8 448H24"/><path d="M10 486H22V472H10ZM8 488H24M8 470H24"/>
<rect x="9" y="521" width="14" height="13"/><path d="M9 525H23M9 529H23M14 521V534M18 521V534"/>
</g>
<g fill="#c9cdd2"><rect x="15" y="386" width="9" height="13" fill="#6fb6ee"/><rect x="9" y="394" width="9" height="7" fill="#222932" stroke="#d8dce2"/><circle cx="18" cy="400" r="3"/>
<path d="M19 412L20 415L23 416L20 417L19 420L18 417L15 416L18 415Z" fill="#f2cf7a" stroke="#f2cf7a"/><rect x="9" y="414" width="9" height="7" fill="#222932" stroke="#d8dce2"/><circle cx="18" cy="422" r="3"/>
<circle cx="16" cy="433" r="1.2"/><circle cx="10" cy="438" r="1.2"/><circle cx="22" cy="438" r="1.2"/><circle cx="16" cy="444" r="1.2"/>
<rect x="11" y="452" width="10" height="10" fill="#5f8fb8"/><rect x="11" y="474" width="10" height="10" fill="#85a6c2"/>
<path d="M8 498H19L24 504V511H8Z" fill="#e3e6ea"/><circle cx="15" cy="505" r="2" fill="#333"/></g>
<text x="16" y="556" text-anchor="middle" style="font-size:20px;fill:#d8dce2">A</text>
<circle cx="11.5" cy="566" r="3.7" fill="#5fd07a"/><circle cx="20.5" cy="575" r="3.7" fill="#7fc2ee"/><path d="M16 565H21V569" stroke="#fff" fill="none" stroke-width="1.5"/>

<!-- right toolbar -->
<path d="M1586 137.5H1600" stroke="#ddd" stroke-dasharray="1.5 1" stroke-width="2"/>
<g class="s">
<circle cx="1589" cy="171" r="3"/><ellipse cx="1594" cy="179" rx="3" ry="3" class="b"/><ellipse cx="1599" cy="179" rx="3" ry="3" class="b"/><path d="M1595 169H1601V173"/>
<path d="M1592 205V191L1586 205ZM1596 205V191L1602 205Z"/><path d="M1601 224H1592C1584 224 1584 214 1592 214H1601M1601 220H1592C1589 220 1589 218 1592 218H1601" class="b"/>
<rect x="1586" y="234" width="6" height="6" class="b"/><rect x="1596" y="234" width="6" height="6" class="b"/><rect x="1586" y="243" width="6" height="6" class="b"/><rect x="1596" y="243" width="6" height="6" class="b"/>
<path d="M1594 256V270M1587 263H1601M1594 256L1591 259H1597ZM1594 270L1591 267H1597ZM1587 263L1590 260V266ZM1601 263L1598 260V266Z" stroke-width="1.5"/>
<path d="M1601 280A7 7 0 1 1 1592 279"/><path d="M1591 276L1596 279L1591 282" fill="#d8dce2"/>
<rect x="1587" y="307" width="8" height="8"/><path d="M1587 307V300H1601V315H1595" class="b"/>
<path d="M1587 336V322H1594V336Z"/><path d="M1594 322H1598L1602 336H1594" class="b"/><path d="M1592 332H1598"/>
<path d="M1586 345H1602M1586 351H1602" stroke-dasharray="2 2"/><path d="M1591 345L1597 356M1597 345L1591 356" stroke-width="1.8" stroke="#fff"/><circle cx="1591" cy="358" r="2"/><circle cx="1597" cy="358" r="2"/>
<path d="M1586 371H1598M1586 376H1598" stroke-dasharray="2 1.5"/><path d="M1600 366V380"/><path d="M1594 369L1598 371L1594 373" fill="#fff"/>
<path d="M1594 390H1587V401H1601V390H1598M1598 388V394"/>
<path d="M1590 412H1587V423H1601V412H1598M1594 410V416"/>
<path d="M1586 439H1592M1596 439H1602" class="b"/><path d="M1589 436L1593 439L1589 442ZM1599 436L1595 439L1599 442Z" fill="#6aa8dc" stroke="none"/>
<path d="M1587 469V462L1593 456M1595 454H1602"/><path d="M1587 491V484C1587 480 1590 476 1595 476H1602"/><path d="M1587 508L1587 503C1588 498 1598 506 1599 502V497" class="b"/>
<path d="M1587 517H1597V531H1587ZM1587 517L1592 513H1602V527L1597 531" class="b"/><rect x="1589" y="520" width="6" height="8"/>
</g>
<g transform="translate(1594,153)"><path d="M-1 6L8-7L10-3L3 8Z" fill="#f2cf7a"/><path d="M-5 8L-1 2L3 8Z" fill="#ef8a70"/><path d="M-8 10H8" stroke="#fff"/></g>

<!-- command line -->
<rect y="1202" width="1614" height="3" fill="#3a4352"/>
<rect y="1205" width="29" height="55" fill="#3a4352"/>
<path d="M8 1211H25" stroke="#ddd" stroke-width="2.5" stroke-dasharray="1.5 1"/>
<path d="M11 1221L19 1229M19 1221L11 1229" stroke="#d8dce2" stroke-width="2"/>
<path d="M9 1255L17 1247" stroke="#d8dce2" stroke-width="2.5"/><circle cx="19" cy="1244" r="3.5" fill="#d8dce2"/>
<rect x="29" y="1205" width="1583" height="29" fill="#c7c7c7"/>
<rect x="29" y="1234" width="1583" height="1" fill="#222"/>
<rect x="29" y="1235" width="1583" height="24" fill="#fff"/>
<text x="31" y="1227" style="font-family:'DejaVu Sans Mono','Noto Sans CJK SC',monospace;font-size:16px;fill:#222;letter-spacing:.12px"><tspan style="font-size:18px">选择注释对象或</tspan> [<tspan style="font-size:18px">放弃</tspan>(U)/<tspan style="font-size:18px">模式</tspan>(M)]: *<tspan style="font-size:18px">取消</tspan>*</text>
<rect x="33.5" y="1242" width="15" height="11" fill="#d8dce0" stroke="#555"/><path d="M36 1245L39 1247L36 1249M40 1250H44" stroke="#333" fill="none"/>
<path d="M52 1245H59L55.5 1249Z" fill="#777"/>
<text x="67" y="1253" style="font-size:17px;font-style:italic;fill:#8d8d8d;letter-spacing:1px">键入命令</text>

<!-- bottom bar -->
<rect y="1259" width="1614" height="34" fill="#222932"/>
<path d="M17 1261H60L62 1278H24Q20 1278 19 1274Z" fill="#3a4352"/>
<path d="M63 1261H114L112 1278H70Z" fill="#2c333f"/>
<path d="M120 1261H143L140 1278H120Z" fill="#2c333f"/>
<text x="27" y="1275" style="font-size:13px;font-weight:bold;fill:#e6e8ea">模型</text>
<text x="74" y="1275" style="font-size:13px;fill:#b8bcc2">布局1</text>
<path d="M132 1264V1274M127 1269H137" stroke="#aeb3ba" stroke-width="2"/>
<!-- status -->
<g fill="#3a4352"><rect x="1007" y="1262" width="28" height="24"/><rect x="1040" y="1262" width="64" height="24"/><rect x="1107" y="1262" width="103" height="24"/><rect x="1212" y="1262" width="65" height="24"/><rect x="1279" y="1262" width="130" height="24"/><rect x="1413" y="1262" width="66" height="24"/><rect x="1481" y="1262" width="23" height="24"/><rect x="1507" y="1262" width="49" height="24"/><rect x="1560" y="1262" width="49" height="24"/></g>
<rect x="1107.5" y="1262" width="22.5" height="24" fill="#5b8dc3"/><rect x="1237" y="1262" width="22" height="24" fill="#5b8dc3"/><rect x="1305" y="1262" width="22" height="24" fill="#5b8dc3"/>
<text x="1009" y="1279" style="font-size:12.5px;fill:#d8dce2">模型</text>
<g class="s">
<path d="M1047 1266V1283M1052 1266V1283M1057 1266V1283M1044 1270H1060M1044 1275H1060M1044 1280H1060"/>
<path d="M1070 1269H1082M1070 1275H1082M1070 1281H1082" stroke-dasharray="1.5 3" stroke-width="1.8"/>
<path d="M1112 1266V1283H1128M1112 1276H1120V1283"/>
<circle cx="1143" cy="1276" r="6.5"/><path d="M1143 1276H1151M1143 1276L1149 1268"/>
<path d="M1177 1267L1188 1282" stroke="#c46060"/><path d="M1182.5 1267V1283" stroke="#7fb07f"/>
<path d="M1216 1283H1230M1216 1283L1229 1269"/>
<rect x="1245" y="1270" width="11" height="13"/><rect x="1241" y="1266" width="4" height="4"/>
<rect x="1486" y="1266" width="9" height="7"/><circle cx="1500" cy="1273" r="3.5"/><path d="M1491 1277L1495 1283H1487Z"/>
<rect x="1564" y="1266" width="15" height="15"/><path d="M1568 1277L1575 1270"/>
</g>
<g fill="#d8dce2">
<path d="M1281 1269H1301V1271H1281ZM1281 1274H1297V1276H1281ZM1281 1279H1291V1281H1281Z"/>
<path d="M1316 1266L1320 1274L1323 1283L1318 1280L1316 1275L1314 1280L1309 1283L1312 1274Z" fill="#fff"/><circle cx="1323" cy="1268" r="2" fill="none" stroke="#fff"/>
<path d="M1340 1267L1344 1275L1347 1283L1342 1280L1340 1275L1338 1280L1333 1283L1336 1275Z"/>
<path d="M1364 1267L1368 1275L1371 1283L1366 1280L1364 1275L1362 1280L1357 1283L1360 1275Z"/>
<circle cx="1424" cy="1274" r="7"/>
<path d="M1458 1273H1476V1275.5H1458ZM1465.8 1265H1468.3V1284H1465.8Z"/>
<rect x="1588" y="1267" width="15" height="2"/><rect x="1588" y="1273" width="15" height="2"/><rect x="1588" y="1279" width="15" height="2"/>
</g>
<path d="M1424 1265V1283M1415 1274H1433M1418 1268L1430 1280M1430 1268L1418 1280" stroke="#d8dce2" stroke-width="2"/><circle cx="1424" cy="1274" r="2.5" fill="#3a4352"/>
<use href="#tri" x="1096" y="1275"/><use href="#tri" x="1163" y="1275"/><use href="#tri" x="1203" y="1275"/><use href="#tri" x="1268" y="1275"/><use href="#tri" x="1402" y="1275"/><use href="#tri" x="1444" y="1275"/>
<text x="1380" y="1279" style="font-size:12.5px;fill:#d8dce2">1:1</text>
<g transform="translate(1518,1274)"><rect x="-8" y="-3" width="7" height="8" fill="#e4b040"/><path d="M-2 6L2 9L8 1" stroke="#5fc46a" stroke-width="2" fill="none"/><path d="M0-9V2M-5-5H5" stroke="#6fb6ee" stroke-width="1.5"/></g>
<g transform="translate(1541,1274)"><path d="M-7-8V2H6" class="s"/><path d="M6 9L10 2L14 9Z" fill="#f0a030"/></g>
<!-- window borders -->
<rect width="1614" height="2" fill="#0f6a9c"/>
<rect width="2" height="1293" fill="#0f6a9c"/>
<rect x="1612" width="2" height="1293" fill="#0f6a9c"/>
<rect y="1291" width="1614" height="2" fill="#0f6a9c"/>
</svg>
</body></html>
